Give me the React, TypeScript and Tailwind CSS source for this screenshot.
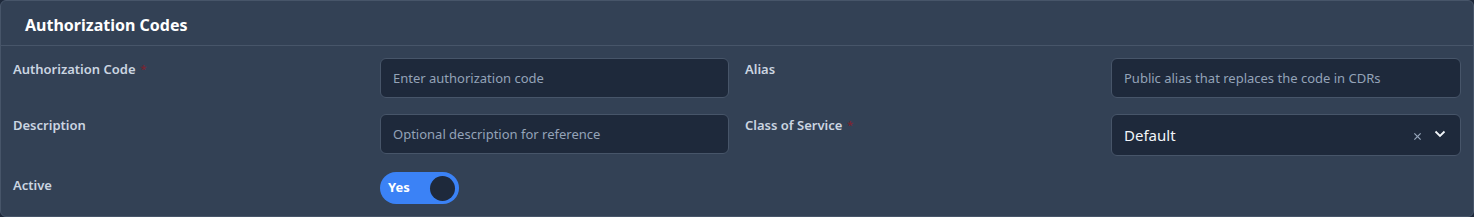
import React from "react";

const font = { fontFamily: '"Noto Sans", "Open Sans", sans-serif' };

function Label({ text, required }: { text: string; required?: boolean }) {
  return (
    <div className="pt-[1px] text-[13px] font-semibold text-[#cbd5e1] leading-[20px]">
      {text}
      {required && <span className="ml-[5px] align-top text-[11px] text-[#7a2431]">*</span>}
    </div>
  );
}

function TextInput({ placeholder }: { placeholder: string }) {
  return (
    <input
      placeholder={placeholder}
      className="h-[40px] w-full rounded-md border border-[#475569] bg-[#1e293b] px-[12px] text-[13px] text-[#e2e8f0] placeholder:text-[#94a3b8] outline-none"
      style={font}
    />
  );
}

export default function App() {
  return (
    <div className="bg-[#1e293b]" style={font}>
      <div className="h-[217px] w-full overflow-hidden rounded-md border border-[#475569] bg-[#334155]">
        <div className="flex h-[45px] items-center border-b border-[#475569] px-6 pt-[3px]">
          <h2 className="text-[16px] font-bold text-white">Authorization Codes</h2>
        </div>
        <div className="grid grid-cols-2 gap-x-4 gap-y-4 px-[12px] pt-3">
          <div className="grid grid-cols-[1fr_349px] gap-x-[9px]">
            <Label text="Authorization Code" required />
            <TextInput placeholder="Enter authorization code" />
          </div>
          <div className="grid grid-cols-[1fr_350px] gap-x-[9px]">
            <Label text="Alias" />
            <TextInput placeholder="Public alias that replaces the code in CDRs" />
          </div>
          <div className="grid grid-cols-[1fr_349px] gap-x-[9px]">
            <Label text="Description" />
            <TextInput placeholder="Optional description for reference" />
          </div>
          <div className="grid grid-cols-[1fr_350px] gap-x-[9px]">
            <Label text="Class of Service" required />
            <div className="flex h-[42px] w-full items-center rounded-md border border-[#475569] bg-[#1e293b] pl-[12px] pr-[14px]">
              <span className="flex-1 text-[15px] text-[#f1f5f9]">Default</span>
              <svg width="9" height="9" viewBox="0 0 10 10" className="mr-[12px] mt-[2px]">
                <path d="M1.5 1.5 L8.5 8.5 M8.5 1.5 L1.5 8.5" stroke="#94a3b8" strokeWidth="1.4" />
              </svg>
              <svg width="12" height="8" viewBox="0 0 12 8" className="mb-[2px]">
                <path d="M1.5 1.5 L6 6 L10.5 1.5" stroke="#f1f5f9" strokeWidth="1.8" fill="none" />
              </svg>
            </div>
          </div>
          <div className="grid grid-cols-[1fr_349px] gap-x-[9px]">
            <div className="pt-[2px]">
              <Label text="Active" />
            </div>
            <div>
              <button className="flex h-[32px] w-[79px] items-center justify-between rounded-full bg-[#3b82f6] pl-[8px] pr-[4px]">
                <span className="text-[13px] font-bold text-white">Yes</span>
                <span className="h-[25px] w-[25px] rounded-full bg-[#1e293b]" />
              </button>
            </div>
          </div>
        </div>
      </div>
    </div>
  );
}
